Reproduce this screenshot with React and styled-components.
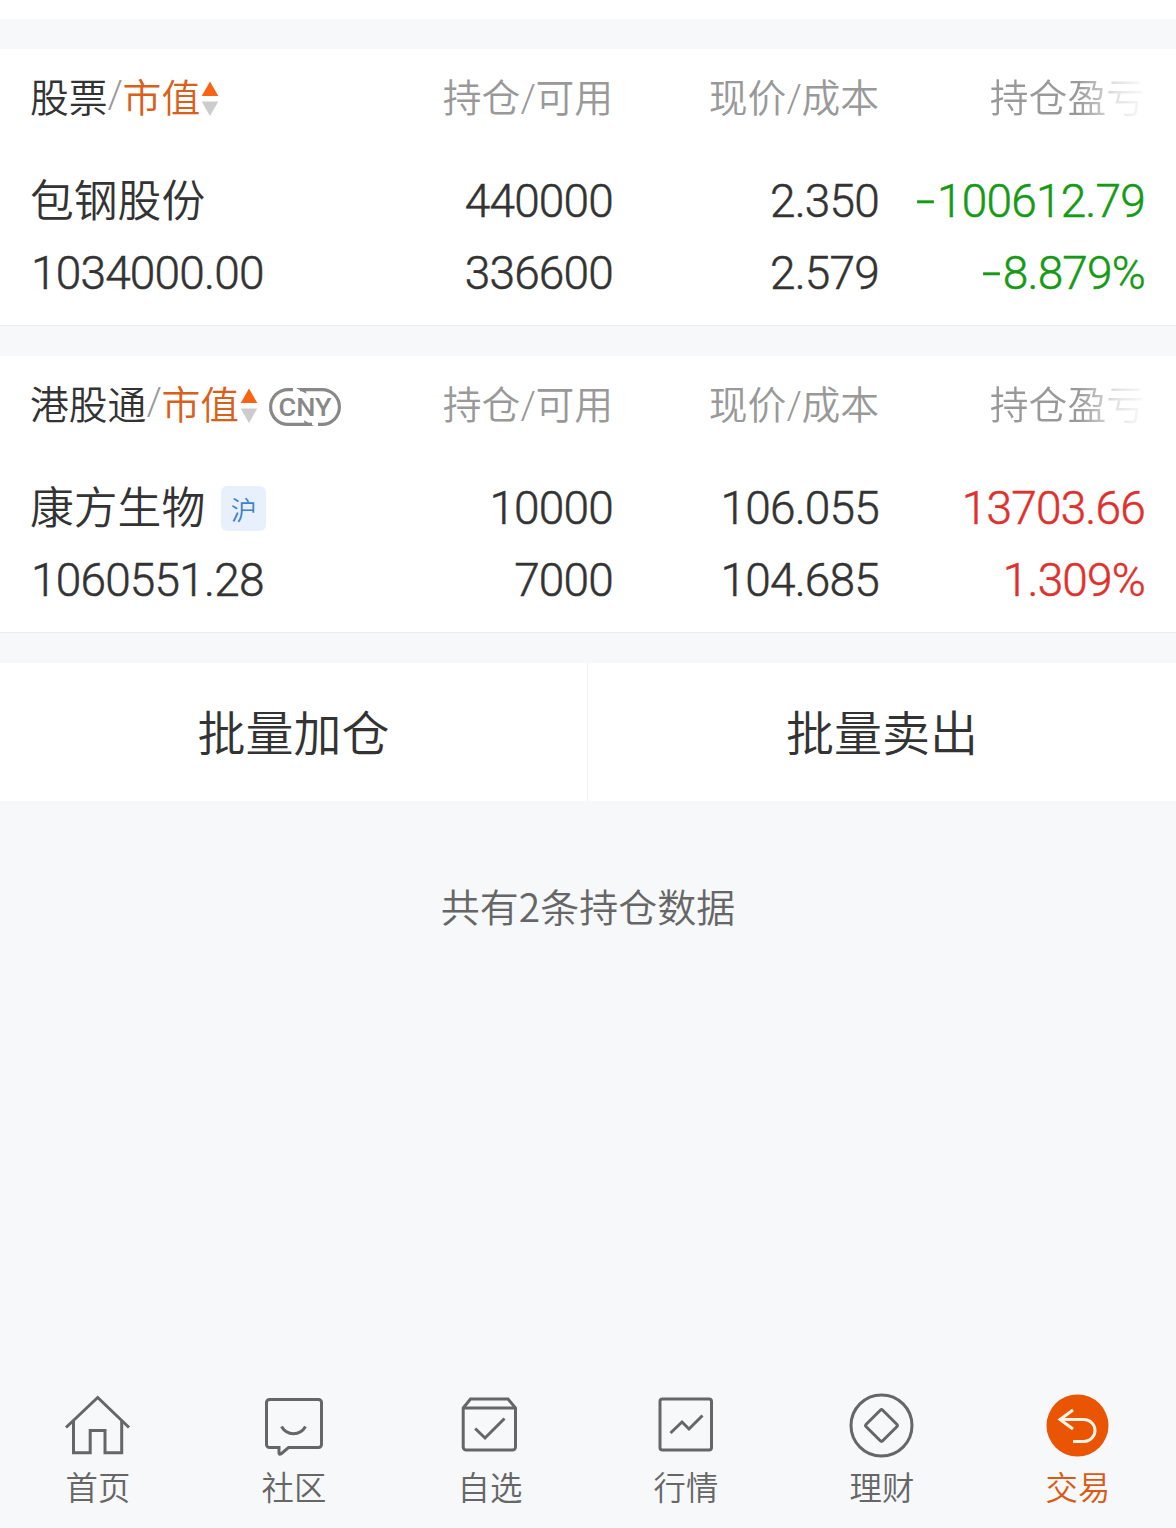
import React from "react";
import styled, { createGlobalStyle } from "styled-components";

const Global = createGlobalStyle`
  *, *::before, *::after { box-sizing: border-box; }
  body {
    margin: 0;
    background: #f7f8fa;
    color: #333;
    font-family: "Noto Sans CJK SC", sans-serif;
    font-weight: 350;
  }
`;

const Screen = styled.div`
  display: flex;
  flex-direction: column;
  width: 1176px;
  height: 1528px;
  overflow: hidden;
  background: #f7f8fa;
`;

const TopEdge = styled.div`
  height: 19px;
  flex: none;
  background: #fff;
`;

const Card = styled.section`
  flex: none;
  height: 277px;
  margin-top: 30px;
  background: #fff;
  border-bottom: 1px solid #ebecef;
`;

const Row = styled.div`
  display: grid;
  grid-template-columns: 1fr 266px 266px 266px;
  align-items: center;
  padding: 0 31px 0 30px;
  height: 72px;
`;

const HeadRow = styled(Row)`
  height: 92px;
  margin-bottom: 24px;
  color: #999;
  font-size: 38.8px;
  line-height: 58px;
`;

const HeadCell = styled.div`
  text-align: right;
  white-space: nowrap;
  ${(p) =>
    p.$fade &&
    `
    background: linear-gradient(to right, #999 0, #999 199px, #c8c8c8 224px, #e2e2e2 236px, #fafafa 266px);
    background-clip: text;
    -webkit-background-clip: text;
    color: transparent;
  `}
`;

const SortHead = styled.div`
  display: flex;
  align-items: center;
  white-space: nowrap;
`;

const Title = styled.span`
  color: #333;
`;

const Slash = styled.span`
  display: inline-block;
  width: 15px;
  text-align: center;
  font-family: Roboto, sans-serif;
  font-weight: 350;
  line-height: 1;
`;

const SortKey = styled.span`
  color: #d9601a;
`;

const SortArrows = styled.svg`
  margin: 7px 0 0 1px;
`;

const CnyIcon = styled.svg`
  margin: 9px 0 0 10px;
`;

const Name = styled.div`
  display: flex;
  align-items: center;
  height: 66px;
  margin-top: -6px;
  font-size: 43.8px;
  line-height: 66px;
  white-space: nowrap;
`;

const Tag = styled.span`
  display: flex;
  align-items: center;
  justify-content: center;
  width: 45px;
  height: 45px;
  margin: 6px 0 0 16px;
  border-radius: 6px;
  background: #e8f1fb;
  color: #3f80cf;
  font-size: 26px;
  line-height: 45px;
`;

const tones = { up: "#e0302d", down: "#159a15", plain: "#333" };

const Num = styled.div`
  font-family: Roboto, "Noto Sans", sans-serif;
  font-size: 46px;
  font-weight: 350;
  line-height: 60px;
  letter-spacing: -0.8px;
  -webkit-text-stroke: 0.5px currentColor;
  text-align: ${(p) => (p.$left ? "left" : "right")};
  padding-left: ${(p) => (p.$left ? "1px" : "0")};
  margin-top: -1px;
  white-space: nowrap;
  color: ${(p) => tones[p.$tone || "plain"]};
`;

const Minus = styled.span`
  display: inline-block;
  width: 24px;
  text-align: center;
  transform: translateY(-1px) scaleX(1.5);
`;

const Actions = styled.div`
  flex: none;
  display: grid;
  grid-template-columns: 588px 588px;
  height: 138px;
  margin-top: 30px;
  background: #fff;
`;

const Action = styled.button`
  border: 0;
  border-right: ${(p) => (p.$divided ? "1px solid #f2f3f5" : "0")};
  padding: 0 0 5px;
  background: none;
  color: #333;
  font: inherit;
  font-size: 48px;
  line-height: 132px;
`;

const Summary = styled.p`
  margin: 74px 0 0;
  text-align: center;
  color: #666;
  font-size: 39px;
  line-height: 60px;
`;

const Tabs = styled.nav`
  display: grid;
  grid-template-columns: repeat(6, 1fr);
  height: 158px;
  margin-top: auto;
`;

const Tab = styled.a`
  display: flex;
  flex-direction: column;
  align-items: center;
  padding-top: 20px;
  color: ${(p) => (p.$active ? "#d95a14" : "#666")};
  font-size: 32.4px;
  font-weight: 350;
  line-height: 48px;
`;

const Icon = styled.svg`
  display: block;
`;

const icons = {
  home: (
    <g>
      <path d="M4 37.500 35.700 7.500 67 37.500" />
      <path d="M11.500 31v31.800h16.700V40.500h14.800v22.300h16.700V31" />
    </g>
  ),
  chat: (
    <g>
      <path d="M11.500 9.500h49a3 3 0 0 1 3 3v42a3 3 0 0 1-3 3H30.500l-7.500 6.500q-2 1-2-1v-5.500H11.500a3 3 0 0 1-3-3v-42a3 3 0 0 1 3-3z" />
      <path d="M23.500 36.500c5.500 9.500 18.500 9.500 24 0" />
    </g>
  ),
  box: (
    <g>
      <path d="M9.200 18 16.500 9H54l7.500 9v39a3 3 0 0 1-3 3H12.200a3 3 0 0 1-3-3z" />
      <path d="M9.200 18h52.300M21.200 38.500 31 48l19.500-19.500" />
    </g>
  ),
  chart: (
    <g>
      <rect x="10" y="9" width="51.500" height="51" rx="2.500" />
      <path d="M20.500 43 32 32l7 7 13.500-13.500" />
    </g>
  ),
  wealth: (
    <g>
      <circle cx="35.500" cy="35.500" r="30.500" />
      <path d="M34.300 20.200a1.700 1.700 0 0 1 2.400 0L50.800 34.300a1.700 1.700 0 0 1 0 2.400L36.700 50.800a1.700 1.700 0 0 1-2.400 0L20.200 36.700a1.700 1.700 0 0 1 0-2.400z" />
    </g>
  ),
  trade: (
    <g>
      <circle cx="35.500" cy="35.500" r="31" fill="#ea5504" stroke="none" />
      <path d="M31 20 18 29.500 31 39M18 29.500H42a11 11 0 0 1 0 22H31" stroke="#fff3e8" />
    </g>
  ),
};

const TabIcon = ({ name }) => (
  <Icon width="72" height="72" viewBox="0 0 72 72" fill="none" stroke="currentColor" strokeWidth="3">
    {icons[name]}
  </Icon>
);

const Sort = () => (
  <SortArrows width="18" height="36" viewBox="0 0 18 36">
    <path d="M9 .500 17.300 15H.7z" fill="#f96414" />
    <path d="M9 35 17.300 20.500H.7z" fill="#ccc" />
  </SortArrows>
);

const Cny = () => (
  <CnyIcon width="74" height="40" viewBox="0 0 74 40">
    <g fill="none" stroke="#888" strokeWidth="3.200">
      <path d="M25 2.600H20a17.300 17.300 0 0 0 0 34.800h24" />
      <path d="M32 2.600h22a17.300 17.300 0 0 1 0 34.800h-4" />
    </g>
    <path d="M28 1h9l1.500 5.800zM46 39h-9l-1-5.800z" fill="#888" />
    <text x="37" y="29" textAnchor="middle" textLength="53" lengthAdjust="spacingAndGlyphs" fontFamily="Roboto, sans-serif" fontSize="26.500" fontWeight="500" fill="#888">
      CNY
    </text>
  </CnyIcon>
);

const Gain = ({ tone, value }) => (
  <Num $tone={tone}>
    {value.startsWith("-") && <Minus>-</Minus>}
    {value.replace("-", "")}
  </Num>
);

const holdings = [
  {
    title: "股票",
    name: "包钢股份",
    value: "1034000.00",
    held: "440000",
    free: "336600",
    price: "2.350",
    cost: "2.579",
    gain: "-100612.79",
    rate: "-8.879%",
    tone: "down",
  },
  {
    title: "港股通",
    cny: true,
    name: "康方生物",
    tag: "沪",
    value: "1060551.28",
    held: "10000",
    free: "7000",
    price: "106.055",
    cost: "104.685",
    gain: "13703.66",
    rate: "1.309%",
    tone: "up",
  },
];

const tabs = [
  ["home", "首页"],
  ["chat", "社区"],
  ["box", "自选"],
  ["chart", "行情"],
  ["wealth", "理财"],
  ["trade", "交易"],
];

const Holding = ({ h }) => (
  <Card>
    <HeadRow>
      <SortHead>
        <Title>{h.title}</Title>
        <Slash>/</Slash>
        <SortKey>市值</SortKey>
        <Sort />
        {h.cny && <Cny />}
      </SortHead>
      <HeadCell>持仓<Slash>/</Slash>可用</HeadCell>
      <HeadCell>现价<Slash>/</Slash>成本</HeadCell>
      <HeadCell $fade>持仓盈亏</HeadCell>
    </HeadRow>
    <Row>
      <Name>
        {h.name}
        {h.tag && <Tag>{h.tag}</Tag>}
      </Name>
      <Num>{h.held}</Num>
      <Num>{h.price}</Num>
      <Gain tone={h.tone} value={h.gain} />
    </Row>
    <Row>
      <Num $left>{h.value}</Num>
      <Num>{h.free}</Num>
      <Num>{h.cost}</Num>
      <Gain tone={h.tone} value={h.rate} />
    </Row>
  </Card>
);

export default function App() {
  return (
    <>
      <Global />
      <Screen>
        <TopEdge />
        {holdings.map((h) => (
          <Holding key={h.name} h={h} />
        ))}
        <Actions>
          <Action $divided>批量加仓</Action>
          <Action>批量卖出</Action>
        </Actions>
        <Summary>共有2条持仓数据</Summary>
        <Tabs>
          {tabs.map(([name, label]) => (
            <Tab key={name} $active={name === "trade"}>
              <TabIcon name={name} />
              {label}
            </Tab>
          ))}
        </Tabs>
      </Screen>
    </>
  );
}
